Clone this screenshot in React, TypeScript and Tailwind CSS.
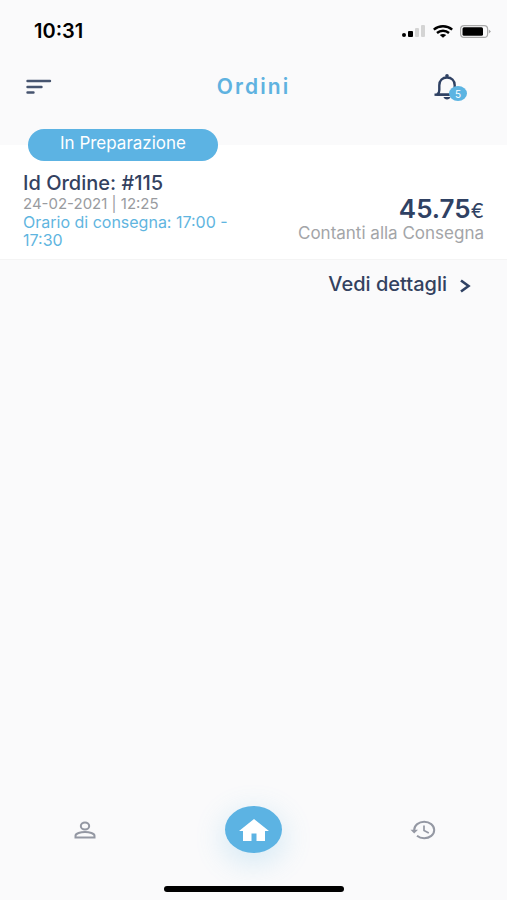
import React from "react";

const order = {
  status: "In Preparazione",
  id: "Id Ordine: #115",
  date: "24-02-2021 | 12:25",
  delivery: "Orario di consegna: 17:00 - 17:30",
  total: "45.75",
  payment: "Contanti alla Consegna",
};

const StatusBar = () => {
  return (
    <div className="flex items-center justify-between pt-[19px] pr-4 pl-[34px] text-black">
      <span className="text-xl leading-6 font-semibold">10:31</span>
      <div className="flex items-center gap-[7px]">
        <svg width="24" height="13" viewBox="0 0 24 13" aria-hidden="true">
          <rect x="0" y="8" width="4" height="4" rx="2" />
          <rect x="6" y="6" width="5" height="6" rx="1" />
          <rect x="13" y="3" width="4" height="9" rx="1" fill="#d4d4d4" />
          <rect x="19" y="0" width="4" height="12" rx="1" fill="#d4d4d4" />
        </svg>
        <svg width="20" height="13" viewBox="0 0 20 13" fill="none" stroke="#000" strokeWidth="2.4" aria-hidden="true">
          <path d="M0.8 4.6C6 0.2 14 0.2 19.2 4.6" />
          <path d="M4 8C7.4 5 12.6 5 16 8" />
          <path d="M6.8 10.1C8.6 8.6 11.4 8.6 13.2 10.1L10 12.8Z" fill="#000" stroke="none" />
        </svg>
        <svg width="31" height="13" viewBox="0 0 31 13" aria-hidden="true">
          <rect x="0.6" y="0.6" width="27" height="11.8" rx="3.5" fill="none" stroke="#a9a9a9" strokeWidth="1.2" />
          <rect x="2.5" y="2.2" width="20.5" height="8.6" rx="1.5" />
          <path d="M28.8 4.5L31 6.5L28.8 8.5Z" fill="#a9a9a9" />
        </svg>
      </div>
    </div>
  );
};

const Header = () => {
  return (
    <header className="grid grid-cols-3 items-center px-6 pt-[30px] pb-11">
      <button type="button" aria-label="Menu" className="justify-self-start">
        <svg width="28" height="16" viewBox="0 0 28 16" stroke="#46546f" strokeWidth="2.4" strokeLinecap="round" aria-hidden="true">
          <path d="M3.5 2H26M3.5 8H17.5M3.5 13.5H9.5" />
        </svg>
      </button>
      <h1 className="text-center text-[21px] leading-6 font-semibold tracking-widest text-[#5fb2e0]">
        Ordini
      </h1>
      <button type="button" aria-label="Notifiche" className="relative mr-4 justify-self-end">
        <svg width="34" height="28" viewBox="0 0 34 28" fill="none" stroke="#2f4163" strokeWidth="2.4" aria-hidden="true">
          <path d="M4.8 21.6V20.8C6.3 19.9 6.3 18.6 6.3 17V12.2C6.3 7.3 9.6 4.5 14 4.5S21.7 7.3 21.7 12.2V17C21.7 18.6 21.7 19.9 23.2 20.8V21.6Z" />
          <path d="M1.5 21.7H26" />
          <circle cx="14" cy="2.8" r="1.8" fill="#2f4163" stroke="none" />
          <path d="M10.5 24H17.5C17 27.2 11 27.2 10.5 24Z" fill="#2f4163" stroke="none" />
        </svg>
        <span className="absolute right-0 bottom-0 flex h-[15px] w-[18px] items-center justify-center rounded-[50%] bg-[#5cb4e2] text-[10px] leading-none text-white">
          5
        </span>
      </button>
    </header>
  );
};

const OrderCard = () => {
  return (
    <main className="flex-1">
      <section className="border-b border-[#f4f4f4] bg-white pb-2.5">
        <span className="relative -top-4 ml-7 inline-block rounded-full bg-[#5cb3e3] px-8 pt-1 pb-2 text-[17px] leading-5 text-white">
          {order.status}
        </span>
        <div className="-mt-4 flex items-end justify-between px-[23px] pt-2.5">
          <div className="w-[220px]">
            <h2 className="text-xl leading-6 font-medium text-[#33415f]">{order.id}</h2>
            <p className="text-[15px] leading-[18px] text-[#999b9f]">{order.date}</p>
            <p className="text-base leading-[18px] text-[#5fb5e0]">{order.delivery}</p>
          </div>
          <div className="pb-1.5 text-right">
            <p className="text-[26px] leading-6 font-semibold text-[#2f4163]">
              {order.total}
              <span className="text-xl leading-6 font-normal">€</span>
            </p>
            <p className="text-[17px] leading-5 text-[#a3a5a8]">{order.payment}</p>
          </div>
        </div>
      </section>
      <div className="flex justify-end pt-3 pr-9">
        <a href="#dettagli" className="flex items-center gap-3 text-xl leading-6 font-medium text-[#33415f]">
          Vedi dettagli
          <svg width="12" height="14" viewBox="0 0 12 14" fill="none" stroke="#2f4163" strokeWidth="2.6" className="mt-1" aria-hidden="true">
            <path d="M2 1.5L9.5 7L2 12.5" />
          </svg>
        </a>
      </div>
    </main>
  );
};

const BottomNav = () => {
  return (
    <nav className="grid grid-cols-3 items-center pb-[33px]">
      <a href="#profilo" aria-label="Profilo" className="justify-self-center">
        <svg width="22" height="18" viewBox="0 0 22 18" fill="none" stroke="#9498a3" strokeWidth="2" aria-hidden="true">
          <ellipse cx="11" cy="5" rx="4.2" ry="3.5" />
          <path d="M1.5 16.5V14.8C1.5 12.4 6.5 11 11 11S20.5 12.4 20.5 14.8V16.5Z" />
        </svg>
      </a>
      <a
        href="#home"
        aria-label="Home"
        className="flex h-[47px] w-[57px] items-center justify-center justify-self-center rounded-[50%] bg-[#5cb3e3] shadow-[0_8px_28px_4px_rgba(92,179,227,0.2)]"
      >
        <svg width="32" height="24" viewBox="0 0 32 24" fill="#fff" aria-hidden="true">
          <path d="M16 1L31 13H27V23H18.5V15.5H13.5V23H5V13H1Z" />
        </svg>
      </a>
      <a href="#storico" aria-label="Storico" className="justify-self-center">
        <svg width="26" height="20" viewBox="0 0 26 20" fill="none" stroke="#9498a3" strokeWidth="2" aria-hidden="true">
          <path d="M4.2 10C4.2 5.3 8.8 1.8 14.2 1.8S24.2 5.3 24.2 10S19.8 18.2 14.2 18.2C11.3 18.2 8.8 17.3 7 15.8" />
          <path d="M0.5 9.8H8L4.2 13.4Z" fill="#9498a3" stroke="none" />
          <path d="M14 5.5V10.5L18.8 13" strokeWidth="1.7" />
        </svg>
      </a>
    </nav>
  );
};

export default function App() {
  return (
    <div className="flex min-h-screen w-full flex-col bg-[#fafafb] font-['Inter',sans-serif]">
      <StatusBar />
      <Header />
      <OrderCard />
      <BottomNav />
      <div className="mx-auto mb-2 h-1.5 w-[180px] rounded-full bg-black" />
    </div>
  );
}
